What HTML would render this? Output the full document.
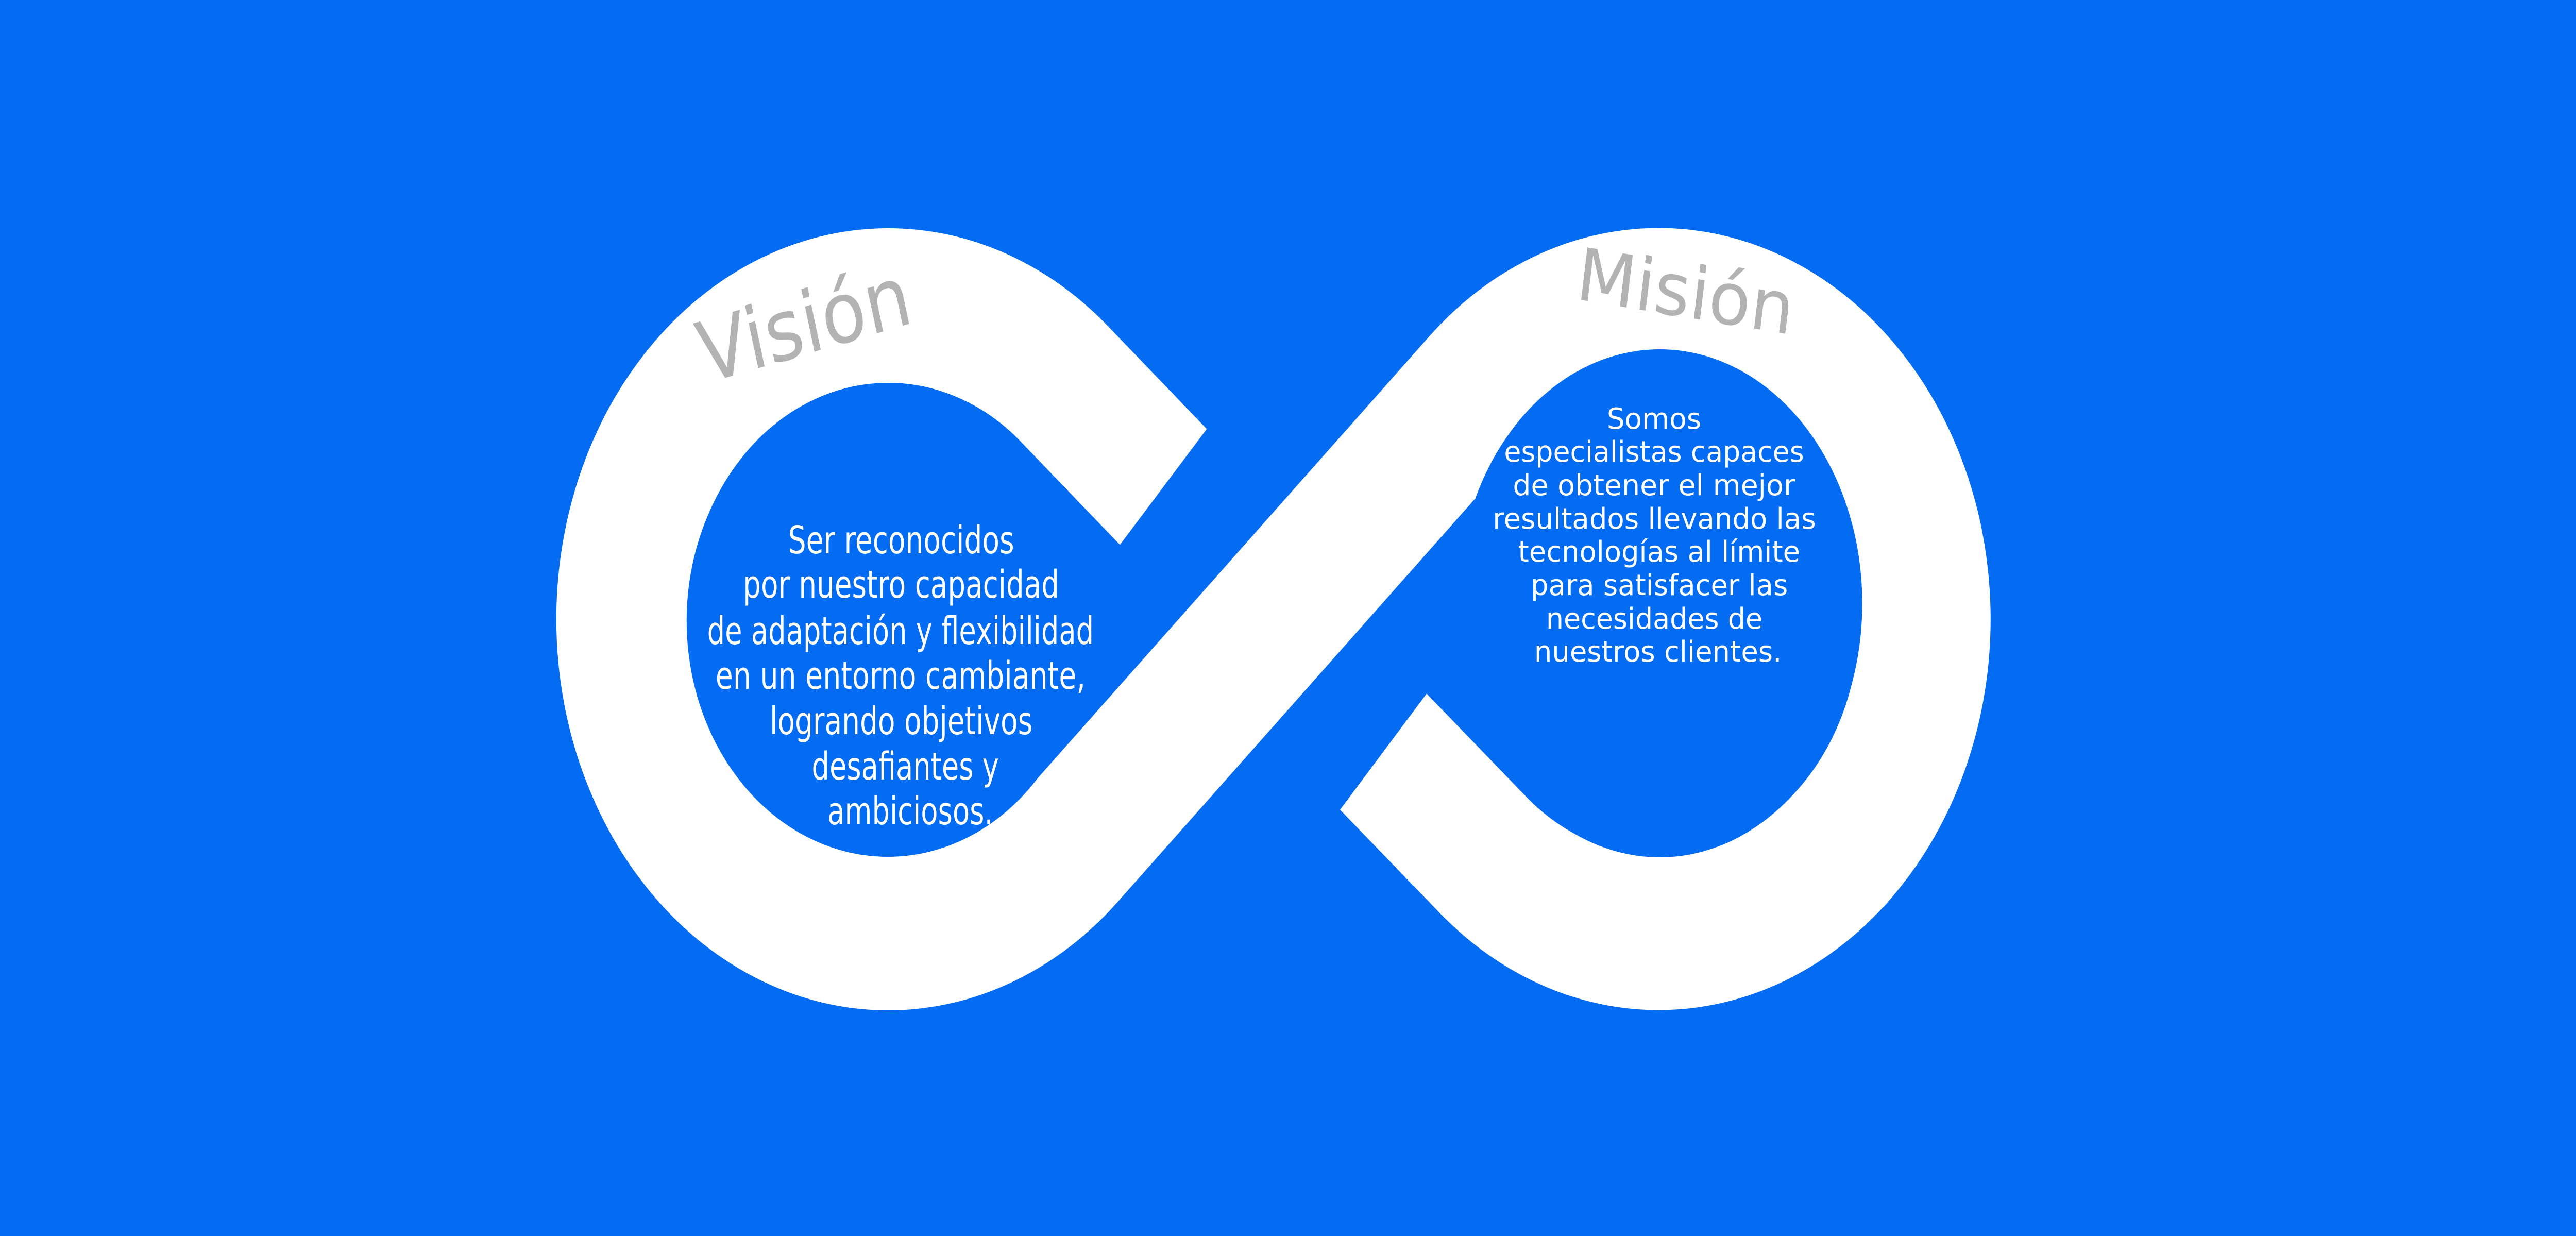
<!DOCTYPE html>
<html><head><meta charset="utf-8"><style>
html,body{margin:0;padding:0;background:#036cf3;overflow:hidden;width:100%;height:100%;}
svg{display:block;position:fixed;left:0;top:0;width:100vw;height:100vh;}
</style></head><body>
<svg viewBox="0 0 5890 2399" preserveAspectRatio="none" xmlns="http://www.w3.org/2000/svg">
<rect width="5890" height="2399" fill="#036cf3"/>
<path d="M 2660 945 L 2429 741 A 609 609 0 1 0 2451 1643 L 3372 761 A 609 609 0 1 1 3394 1662 L 3163 1459" fill="none" stroke="#fff" stroke-width="300"/>
<ellipse cx="2030" cy="1205" rx="460" ry="458" fill="#036cf3"/>
<ellipse cx="3795" cy="1171" rx="463" ry="493" fill="#036cf3"/>
<g font-family="DejaVu Sans, Liberation Sans, sans-serif" fill="#b3b3b3">
<text x="1612" y="745" font-size="165" textLength="495" lengthAdjust="spacingAndGlyphs" transform="rotate(-14 1612 745)">Visión</text>
<text x="3600" y="580" font-size="141" textLength="500" lengthAdjust="spacingAndGlyphs" transform="rotate(8 3600 580)">Misión</text>
</g>
<g font-family="DejaVu Sans, Liberation Sans, sans-serif" fill="#fff" font-size="74">
<text x="1802" y="1074" textLength="517" lengthAdjust="spacingAndGlyphs">Ser reconocidos</text>
<text x="1699" y="1160" textLength="723" lengthAdjust="spacingAndGlyphs">por nuestro capacidad</text>
<text x="1617" y="1250" textLength="884" lengthAdjust="spacingAndGlyphs">de adaptación y flexibilidad</text>
<text x="1636" y="1337" textLength="846" lengthAdjust="spacingAndGlyphs">en un entorno cambiante,</text>
<text x="1760" y="1425" textLength="601" lengthAdjust="spacingAndGlyphs">logrando objetivos</text>
<text x="1856" y="1513" textLength="428" lengthAdjust="spacingAndGlyphs">desafiantes y</text>
<text x="1892" y="1600" textLength="379" lengthAdjust="spacingAndGlyphs">ambiciosos.</text>
</g>
<g font-family="DejaVu Sans, Liberation Sans, sans-serif" fill="#fff" font-size="56">
<text x="3674" y="832" textLength="216" lengthAdjust="spacingAndGlyphs">Somos</text>
<text x="3439" y="896" textLength="686" lengthAdjust="spacingAndGlyphs">especialistas capaces</text>
<text x="3459" y="961" textLength="646" lengthAdjust="spacingAndGlyphs">de obtener el mejor</text>
<text x="3413" y="1026" textLength="739" lengthAdjust="spacingAndGlyphs">resultados llevando las</text>
<text x="3471" y="1090" textLength="645" lengthAdjust="spacingAndGlyphs">tecnologías al límite</text>
<text x="3500" y="1155" textLength="588" lengthAdjust="spacingAndGlyphs">para satisfacer las</text>
<text x="3535" y="1220" textLength="495" lengthAdjust="spacingAndGlyphs">necesidades de</text>
<text x="3508" y="1284" textLength="566" lengthAdjust="spacingAndGlyphs">nuestros clientes.</text>
</g>
</svg>
</body></html>
